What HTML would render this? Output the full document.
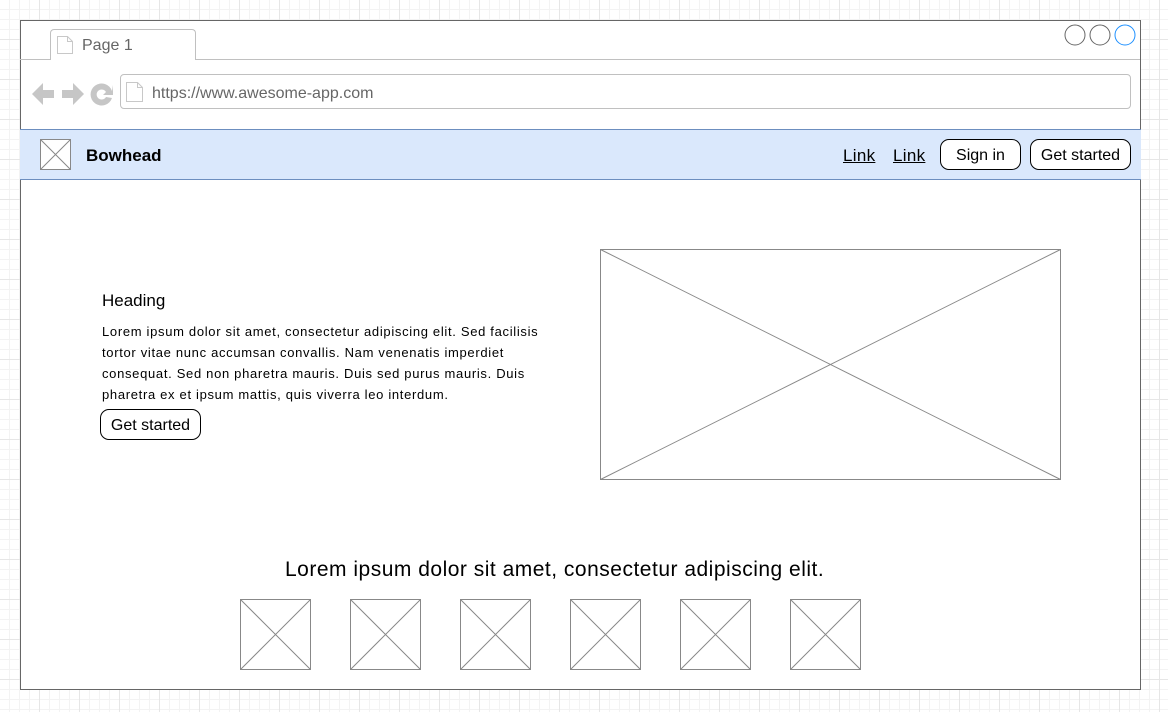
<!DOCTYPE html>
<html><head><style>
*{margin:0;padding:0;box-sizing:border-box}
body{width:1168px;height:712px;position:relative;overflow:hidden;font-family:"Liberation Sans",Arial,sans-serif;
background-color:#fff;
background-image:linear-gradient(#e6e6e6 1px,transparent 1px),linear-gradient(90deg,#e6e6e6 1px,transparent 1px),linear-gradient(#f3f3f3 1px,transparent 1px),linear-gradient(90deg,#f3f3f3 1px,transparent 1px);
background-size:40px 40px,40px 40px,10px 10px,10px 10px;background-position:0 -1px,-1px 0,0 -1px,-1px 0}
.a{position:absolute}
.frame{left:20px;top:20px;width:1121px;height:670px;border:1px solid #666;background:#fff}
.btn{position:absolute;border:1px solid #000;border-radius:9px;background:#fff;font-size:16px;text-align:center;line-height:31px}
</style></head><body>
<div class="a frame"></div>
<div class="a" style="left:50px;top:29px;width:146px;height:31px;border:1px solid #c0c0c0;border-bottom:none;border-radius:4px 4px 0 0;background:#fff"></div>
<div class="a" style="left:20px;top:59px;width:30px;height:1px;background:#c0c0c0"></div>
<div class="a" style="left:195px;top:59px;width:945px;height:1px;background:#c0c0c0"></div>
<svg class="a" style="left:56px;top:35px" width="18" height="20"><path d="M1.5 1.5h10l5 5v12h-15z M11.5 1.5v5h5" fill="#fff" stroke="#c8c8c8"/></svg>
<div class="a" style="left:82px;top:37px;font-size:16px;color:#666">Page 1</div>
<svg class="a" style="left:1063px;top:23px" width="76" height="24"><circle cx="12" cy="12" r="10" fill="#fff" stroke="#666"/><circle cx="37" cy="12" r="10" fill="#fff" stroke="#666"/><circle cx="62" cy="12" r="10" fill="#fff" stroke="#1e90ff"/></svg>
<svg class="a" style="left:30px;top:80px" width="88" height="28"><path d="M2 14l11-11v7h11v8h-11v7z" fill="#c6c6c6"/><path d="M54 14l-11-11v7h-11v8h11v7z" fill="#c6c6c6"/><path d="M82 11a11 11 0 1 0 0 7l-6-1a5 5 0 1 1 0-5l-3 3h10v-10z" fill="#c6c6c6"/></svg>
<div class="a" style="left:120px;top:74px;width:1011px;height:35px;border:1px solid #c0c0c0;border-radius:4px;background:#fff"></div>
<svg class="a" style="left:125px;top:81px" width="20" height="22"><path d="M1.5 1.5h11l5 5v14h-16z M12.5 1.5v5h5" fill="#fff" stroke="#c8c8c8"/></svg>
<div class="a" style="left:152px;top:85px;font-size:16px;color:#666">https://www.awesome-app.com</div>
<div class="a" style="left:20px;top:129px;width:1121px;height:51px;background:#dae8fc;border-top:1px solid #6c8ebf;border-bottom:1px solid #6c8ebf"></div>
<svg class="a" style="left:40px;top:139px" width="31" height="31"><rect x=".5" y=".5" width="30" height="30" fill="#fff" stroke="#888"/><path d="M.5 .5L30.5 30.5M30.5 .5L.5 30.5" stroke="#888"/></svg>
<div class="a" style="left:86px;top:146px;font-size:17px;font-weight:bold">Bowhead</div>
<div class="a" style="left:843px;top:146px;font-size:17px;text-decoration:underline;letter-spacing:0.3px">Link</div>
<div class="a" style="left:893px;top:146px;font-size:17px;text-decoration:underline;letter-spacing:0.3px">Link</div>
<div class="btn" style="left:940px;top:139px;width:81px;height:31px">Sign in</div>
<div class="btn" style="left:1030px;top:139px;width:101px;height:31px">Get started</div>
<div class="a" style="left:102px;top:291px;font-size:17px">Heading</div>
<div class="a" style="left:102px;top:321px;width:470px;font-size:13px;line-height:21px;letter-spacing:0.68px;white-space:nowrap">Lorem ipsum dolor sit amet, consectetur adipiscing elit. Sed facilisis<br>tortor vitae nunc accumsan convallis. Nam venenatis imperdiet<br>consequat. Sed non pharetra mauris. Duis sed purus mauris. Duis<br>pharetra ex et ipsum mattis, quis viverra leo interdum.</div>
<div class="btn" style="left:100px;top:409px;width:101px;height:31px">Get started</div>
<svg class="a" style="left:600px;top:249px" width="461" height="231"><rect x=".5" y=".5" width="460" height="230" fill="#fff" stroke="#888"/><path d="M.5 .5L460.5 230.5M460.5 .5L.5 230.5" stroke="#888"/></svg>
<div class="a" style="left:285px;top:558px;font-size:21px;letter-spacing:0.5px;white-space:nowrap">Lorem ipsum dolor sit amet, consectetur adipiscing elit.</div>
<svg class="a" style="left:240px;top:599px" width="622" height="72">
<g stroke="#888" fill="#fff">
<rect x=".5" y=".5" width="70" height="70"/><path d="M.5 .5l70 70M70.5 .5l-70 70"/>
<rect x="110.5" y=".5" width="70" height="70"/><path d="M110.5 .5l70 70M180.5 .5l-70 70"/>
<rect x="220.5" y=".5" width="70" height="70"/><path d="M220.5 .5l70 70M290.5 .5l-70 70"/>
<rect x="330.5" y=".5" width="70" height="70"/><path d="M330.5 .5l70 70M400.5 .5l-70 70"/>
<rect x="440.5" y=".5" width="70" height="70"/><path d="M440.5 .5l70 70M510.5 .5l-70 70"/>
<rect x="550.5" y=".5" width="70" height="70"/><path d="M550.5 .5l70 70M620.5 .5l-70 70"/>
</g></svg>
</body></html>
